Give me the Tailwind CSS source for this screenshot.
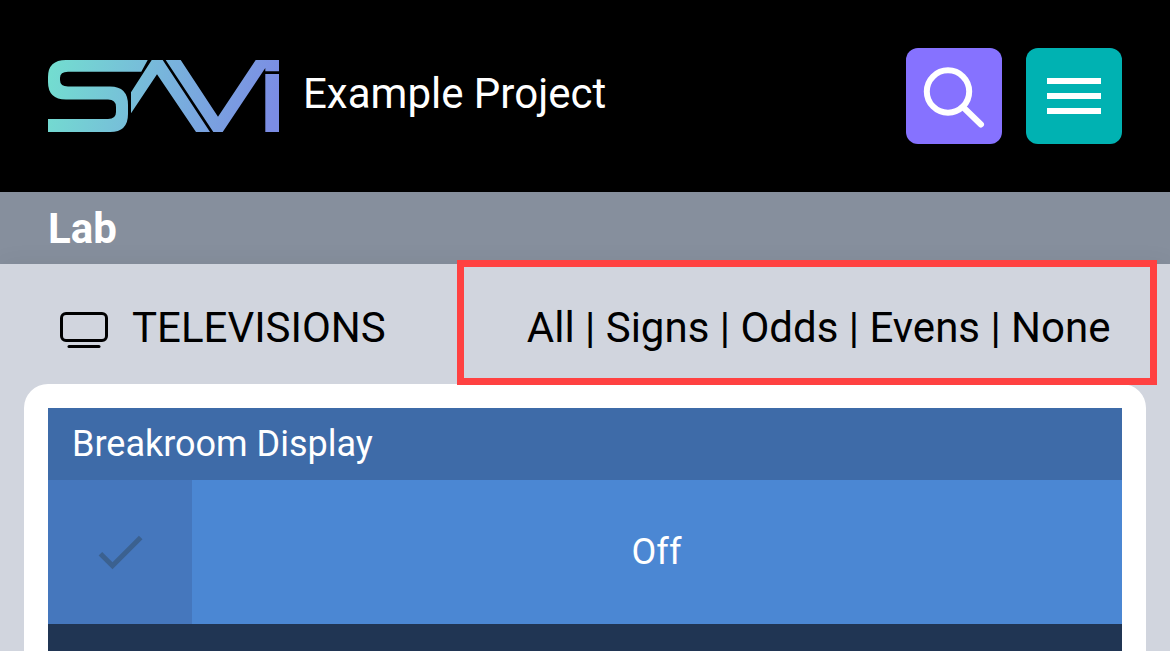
<!DOCTYPE html>
<html lang="en">
<head>
<meta charset="utf-8">
<title>Example Project</title>
<script src="https://cdn.jsdelivr.net/npm/@tailwindcss/browser@4"></script>
</head>
<body class="h-[651px] overflow-hidden bg-[#d1d5de] font-['Roboto',sans-serif]">
<header class="flex h-48 items-center bg-black px-12 text-white">
  <svg class="h-[72px] w-[231px] shrink-0" viewBox="0 0 231 72">
    <defs><linearGradient id="g" gradientUnits="userSpaceOnUse" x1="0" y1="20" x2="222" y2="72"><stop offset="0" stop-color="#73ddd0"/><stop offset=".5" stop-color="#78b4dc"/><stop offset="1" stop-color="#7b8ce4"/></linearGradient></defs>
    <g fill="url(#g)">
      <path d="M99.7 0H18Q0 0 0 17V22Q0 39.5 18 39.5H60Q68 39.5 68 47V52Q68 59 60 59H0V72H62Q80 72 80 54V45Q80 26.5 62 26.5H20Q12 26.5 12 20V18Q12 11.7 20 11.7H93.3Z"/>
      <path d="M83 53.3V32.3L103.7 0H114.7L162 72H148L109 14.3Z"/>
      <path d="M117.7 0H132.7L170 56.7L207.7 0H231V11.3H217.3V8L174.7 72H165.3Z"/>
      <path d="M217.3 14H231V72H217.3Z"/>
    </g>
  </svg>
  <h1 class="ml-6 -mt-1 text-[42px] leading-[48px]">Example Project</h1>
  <button class="ml-auto size-24 rounded-xl bg-[#8672ff]" aria-label="Search">
    <svg class="size-24" viewBox="0 0 96 96" fill="none" stroke="#fff" stroke-width="6" stroke-linecap="round"><circle cx="42" cy="43.5" r="21.2"/><path d="M58 60L75 76.5"/></svg>
  </button>
  <button class="ml-6 flex size-24 flex-col items-center justify-center gap-[9px] rounded-xl bg-[#00b2b2]" aria-label="Menu">
    <span class="h-1.5 w-[54px] bg-white"></span><span class="h-1.5 w-[54px] bg-white"></span><span class="h-1.5 w-[54px] bg-white"></span>
  </button>
</header>
<div class="flex h-[72px] items-center bg-[#868f9d] px-12 pt-0.5"><h2 class="text-[42px] leading-[70px] font-bold text-white">Lab</h2></div>
<main class="relative h-[387px] px-6 shadow-[0_0_24px_rgba(0,0,0,0.06)]">
  <div class="flex h-[120px] items-center pr-[35.5px] pl-9 text-[42px] leading-[48px] text-black">
    <svg class="mt-[11px] h-9 w-12" viewBox="0 0 48 36" fill="none" stroke="#000" stroke-width="3"><rect x="1.5" y="1.5" width="45" height="27" rx="4.5"/><path d="M9 34.5H39" stroke-linecap="round"/></svg>
    <h3 class="mt-2 ml-6">TELEVISIONS</h3>
    <div class="mt-2 ml-auto whitespace-pre"><span>All</span> | <span>Signs</span> | <span>Odds</span> | <span>Evens</span> | <span>None</span></div>
  </div>
  <section class="h-[267px] rounded-t-3xl bg-white px-6 pt-6">
    <div class="flex h-[72px] items-center bg-[#3e6ba8] px-6 text-[36px] text-white">Breakroom Display</div>
    <div class="flex h-36">
      <div class="flex w-36 items-center justify-center bg-[#4577bd]">
        <svg class="size-[60px]" viewBox="0 0 60 60" fill="none" stroke="#3b6190" stroke-width="5"><path d="M10.4 31.7L22.5 43.8L50.7 15.6"/></svg>
      </div>
      <div class="flex flex-1 items-center justify-center bg-[#4b87d3] pr-px text-[36px] text-white">Off</div>
    </div>
    <div class="h-[27px] bg-[#203553]"></div>
  </section>
  <div class="absolute top-[-4px] left-[457px] h-[125px] w-[700px] border-[7px] border-[#ff4141]"></div>
</main>
</body>
</html>
